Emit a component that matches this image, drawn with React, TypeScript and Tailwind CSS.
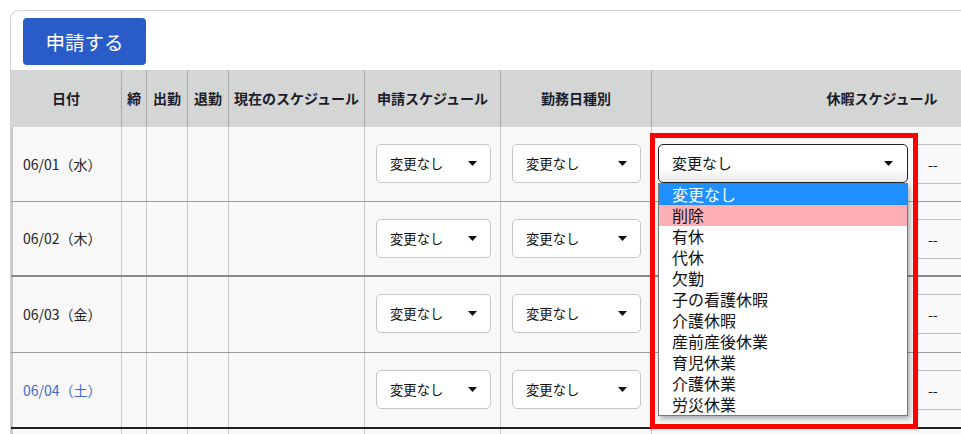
import React from "react";

const FONT = { fontFamily: '"Noto Sans CJK JP", "Noto Sans", sans-serif' };

const days = [
  { date: "06/01（水）", h: "h-[75px]", line: "border-b border-[#9a9a9a]", blue: false },
  { date: "06/02（木）", h: "h-[75px]", line: "border-b-2 border-[#8a8a8a]", blue: false },
  { date: "06/03（金）", h: "h-[76px]", line: "border-b border-[#9a9a9a]", blue: false },
  { date: "06/04（土）", h: "h-[76px]", line: "border-b-2 border-[#222]", blue: true },
];

const options = [
  "変更なし",
  "削除",
  "有休",
  "代休",
  "欠勤",
  "子の看護休暇",
  "介護休暇",
  "産前産後休業",
  "育児休業",
  "介護休業",
  "労災休業",
];

function Caret() {
  return (
    <svg width="9" height="5" viewBox="0 0 9 5" className="shrink-0">
      <polygon points="0,0 9,0 4.5,5" fill="#111" />
    </svg>
  );
}

function Select({ w, active = false, hidden = false }: { w: string; active?: boolean; hidden?: boolean }) {
  return (
    <div
      className={
        active
          ? `${w} h-[39px] rounded-[5px] border-[1.5px] border-[#222] bg-gradient-to-b from-white from-60% to-[#ececec] flex items-center justify-between pl-[13px] pr-[14px] text-[15px] text-[#111]`
          : `${w} h-[39px] rounded-[5px] border border-[#c6c6c6] bg-white flex items-center justify-between pl-[13px] pr-[13px] text-[13.33px] text-[#111]`
      }
    >
      {/* the ones hidden under the open list only need their box */}
      {!hidden && <span>変更なし</span>}
      {!hidden && <Caret />}
    </div>
  );
}

const cols = "grid grid-cols-[111px_25px_41px_41px_136px_136px_151px_460px]";

export default function App() {
  return (
    <div className="relative w-[961px] h-[434px] overflow-hidden bg-white" style={FONT}>
      <div className="ml-[10px] mt-[10px] w-[1200px] border-l border-t border-[#d2d2d2] rounded-tl-[9px]">
        <div className="ml-[12px] mt-[7px] w-[123px] h-[47px] rounded-[4px] bg-[#295bc9] text-white text-[19.5px] flex items-center justify-center">
          申請する
        </div>

        <div className="mt-[5px]">
          {/* header */}
          <div className={`${cols} h-[57px] bg-[#d4d6d5] text-[14px] font-bold text-[#1b1b2a]`}>
            {["日付", "締", "出勤", "退勤", "現在のスケジュール", "申請スケジュール", "勤務日種別"].map((t) => (
              <div key={t} className="border-r border-[#a9a9a9] flex items-center justify-center whitespace-nowrap">
                {t}
              </div>
            ))}
            <div className="flex items-center justify-center">休暇スケジュール</div>
          </div>

          {/* rows */}
          {days.map((d, idx) => (
            <div key={d.date} className={`${cols} ${d.h} ${d.line} bg-[#f8f8f8] text-[14px]`}>
              <div
                className={`border-l-2 border-l-[#c8c8c8] border-r border-r-[#c8c8c8] flex items-center pl-[10px] ${
                  d.blue ? "text-[#3f68c8]" : "text-[#222]"
                }`}
              >
                {d.date}
              </div>
              <div className="border-r border-[#c8c8c8]" />
              <div className="border-r border-[#c8c8c8]" />
              <div className="border-r border-[#c8c8c8]" />
              <div className="border-r border-[#c8c8c8]" />
              <div className="border-r border-[#c8c8c8] pl-[11px] pt-[17px]">
                <Select w="w-[115px]" />
              </div>
              <div className="border-r border-[#c8c8c8] pl-[11px] pt-[17px]">
                <Select w="w-[129px]" />
              </div>
              <div className="flex items-start pt-[17px]">
                <div className="pl-[6px] pr-[10px]">
                  <Select w="w-[250px]" active={idx === 0} hidden={idx > 0} />
                </div>
                <div className="flex-1 h-[40px] border-y border-[#c0c0c0] flex items-center pl-[10px] text-[#111]">
                  --
                </div>
              </div>
            </div>
          ))}

          {/* top of the next row, cut off by the window */}
          <div className={`${cols} h-[20px] bg-[#f8f8f8]`}>
            <div className="border-l-2 border-l-[#c8c8c8] border-r border-r-[#c8c8c8]" />
            <div className="border-r border-[#c8c8c8]" />
            <div className="border-r border-[#c8c8c8]" />
            <div className="border-r border-[#c8c8c8]" />
            <div className="border-r border-[#c8c8c8]" />
            <div className="border-r border-[#c8c8c8]" />
            <div className="border-r border-[#c8c8c8]" />
            <div />
          </div>
        </div>
      </div>

      {/* open dropdown list */}
      <div className="absolute left-[658px] top-[183px] w-[250px] border border-[#777] bg-white shadow-[2px_3px_5px_rgba(0,0,0,0.3)] text-[16px] leading-[21px] text-[#111]">
        {options.map((o, i) => (
          <div
            key={o}
            className={`h-[21px] pl-[13px] ${
              i === 0 ? "bg-[#1e90ff] text-white" : i === 1 ? "bg-[#ffb0b6]" : ""
            }`}
          >
            {o}
          </div>
        ))}
      </div>

      {/* red highlight frame */}
      <div className="absolute left-[650px] top-[133px] w-[268px] h-[296px] border-[5px] border-[#ff0000] pointer-events-none" />
    </div>
  );
}
